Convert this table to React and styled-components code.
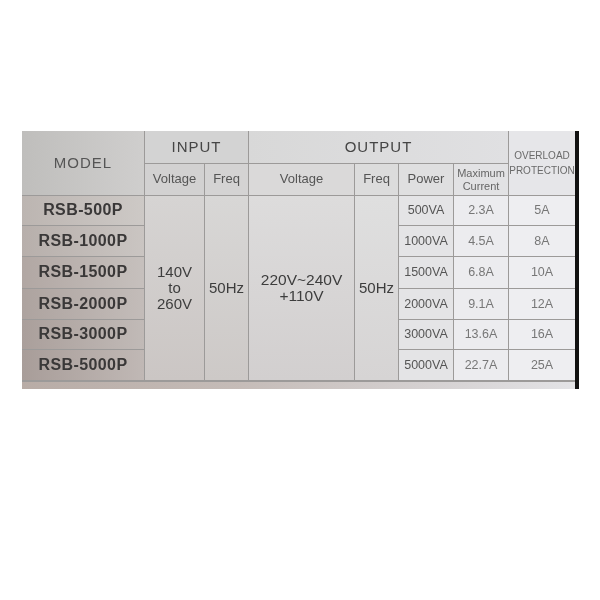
import React from "react";
import styled, { createGlobalStyle } from "styled-components";

const Global = createGlobalStyle`
  html, body { margin: 0; padding: 0; background: #ffffff; }
  body { font-family: "Liberation Sans", Arial, sans-serif; }
`;

const Page = styled.div`
  width: 600px;
  height: 600px;
  padding: 131px 0 0 22px;
  box-sizing: border-box;
`;

const Photo = styled.div`
  width: 556px;
  display: grid;
  grid-template-columns: 122px 59px 43px 105px 43px 54px 54px 66px 3px;
  grid-template-rows: 32px 31px 29px 30px 31px 30px 29px 30px 8px;
  gap: 1px;
  background: #9c9a99;
  font-family: "Liberation Sans", Arial, sans-serif;
`;

const Cell = styled.div`
  grid-column: ${(p) => p.$col};
  grid-row: ${(p) => p.$row};
  background: ${(p) => p.$bg || "#d6d5d4"};
  color: ${(p) => p.$color || "#444"};
  font-size: ${(p) => p.$size || 13}px;
  font-weight: ${(p) => (p.$bold ? 700 : 400)};
  letter-spacing: ${(p) => p.$ls || 0}px;
  display: flex;
  flex-direction: column;
  align-items: center;
  justify-content: ${(p) => p.$justify || "center"};
  padding-top: ${(p) => p.$pt || 0}px;
  text-align: center;
  line-height: ${(p) => p.$lh || 1.15};
  box-sizing: border-box;
  white-space: nowrap;
  overflow: hidden;
  filter: blur(0.3px);
`;

const Strip = styled.div`
  grid-column: 9;
  grid-row: 1 / 10;
  background: #111;
  margin-left: -1px;
`;

const Bottom = styled.div`
  grid-column: 1 / 9;
  grid-row: 9;
  background: linear-gradient(90deg, #b8aca6 0%, #c5bcb8 40%, #d8d5d6 80%, #e3e3e6 100%);
  margin-top: 1px;
`;

const modelBg = [
  "linear-gradient(90deg,#bcb5b1,#cdc9c6)",
  "linear-gradient(90deg,#b7afab,#cac5c2)",
  "linear-gradient(90deg,#b1a7a3,#c6c0bd)",
  "linear-gradient(90deg,#ada39f,#c3bcb9)",
  "linear-gradient(90deg,#aa9f9b,#c1bab7)",
  "linear-gradient(90deg,#a89d99,#c0b8b5)",
];

const rows = [
  ["RSB-500P", "500VA", "2.3A", "5A"],
  ["RSB-1000P", "1000VA", "4.5A", "8A"],
  ["RSB-1500P", "1500VA", "6.8A", "10A"],
  ["RSB-2000P", "2000VA", "9.1A", "12A"],
  ["RSB-3000P", "3000VA", "13.6A", "16A"],
  ["RSB-5000P", "5000VA", "22.7A", "25A"],
];

export default function App() {
  return (
    <>
      <Global />
      <Page>
        <Photo>
          <Cell $col="1" $row="1 / 3" $bg="linear-gradient(90deg,#bfbebc,#cfcecd)" $size={15} $ls={1} $color="#555">
            MODEL
          </Cell>
          <Cell $col="2 / 4" $row="1" $bg="#d3d3d3" $size={15} $ls={1} $color="#454545">
            INPUT
          </Cell>
          <Cell $col="4 / 8" $row="1" $bg="linear-gradient(90deg,#d8d8d8,#e0e0e2)" $size={15} $ls={1} $color="#454545">
            OUTPUT
          </Cell>
          <Cell $col="8" $row="1 / 3" $bg="#e6e6e9" $size={10} $color="#6a6a6a" $justify="flex-start" $pt={18} $lh={1.45}>
            <span>OVERLOAD</span>
            <span>PROTECTION</span>
          </Cell>

          <Cell $col="2" $row="2" $bg="#d2d1d1" $size={13} $color="#555">Voltage</Cell>
          <Cell $col="3" $row="2" $bg="#d4d3d3" $size={13} $color="#555">Freq</Cell>
          <Cell $col="4" $row="2" $bg="#dad9d9" $size={13} $color="#555">Voltage</Cell>
          <Cell $col="5" $row="2" $bg="#dcdcdc" $size={13} $color="#555">Freq</Cell>
          <Cell $col="6" $row="2" $bg="#dfdfe0" $size={13} $color="#555">Power</Cell>
          <Cell $col="7" $row="2" $bg="#e2e2e4" $size={11} $color="#666" $lh={1.15}>
            <span>Maximum</span>
            <span>Current</span>
          </Cell>

          {rows.map((r, i) => (
            <React.Fragment key={r[0]}>
              <Cell $col="1" $row={`${i + 3}`} $bg={modelBg[i]} $size={16} $bold $ls={0.4} $color="#3a3838">
                {r[0]}
              </Cell>
              <Cell $col="6" $row={`${i + 3}`} $bg="#e4e4e6" $size={12.5} $color="#555">
                {r[1]}
              </Cell>
              <Cell $col="7" $row={`${i + 3}`} $bg="#ececef" $size={12.5} $color="#777">
                {r[2]}
              </Cell>
              <Cell $col="8" $row={`${i + 3}`} $bg="#eeeef1" $size={12.5} $color="#777">
                {r[3]}
              </Cell>
            </React.Fragment>
          ))}

          <Cell $col="2" $row="3 / 9" $bg="linear-gradient(180deg,#d6d4d3,#cbc6c4)" $size={15} $color="#3d3d3d" $lh={1.07}>
            <span>140V</span>
            <span>to</span>
            <span>260V</span>
          </Cell>
          <Cell $col="3" $row="3 / 9" $bg="linear-gradient(180deg,#d8d7d6,#cdc9c7)" $size={15} $color="#3d3d3d">
            50Hz
          </Cell>
          <Cell $col="4" $row="3 / 9" $bg="linear-gradient(180deg,#dddcdc,#d2cfcf)" $size={15.5} $color="#3d3d3d" $lh={1.05}>
            <span>220V~240V</span>
            <span>+110V</span>
          </Cell>
          <Cell $col="5" $row="3 / 9" $bg="linear-gradient(180deg,#dfdfdf,#d6d4d4)" $size={15} $color="#3d3d3d">
            50Hz
          </Cell>

          <Bottom />
          <Strip />
        </Photo>
      </Page>
    </>
  );
}
